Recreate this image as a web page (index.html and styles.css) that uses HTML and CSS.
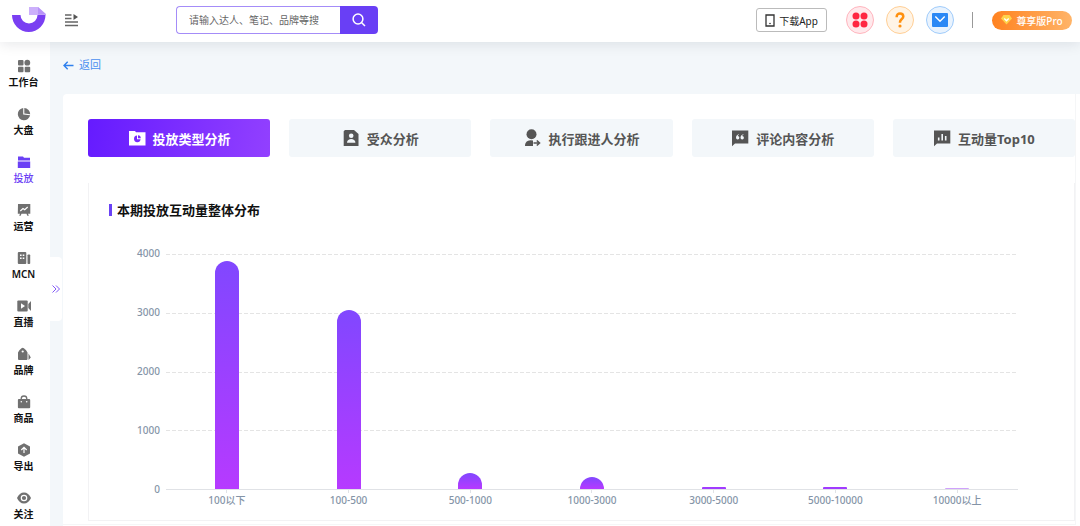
FILE: index.html
```html
<!DOCTYPE html>
<html lang="zh-CN">
<head>
<meta charset="utf-8">
<meta name="viewport" content="width=device-width, initial-scale=1">
<title>投放类型分析</title>
<link rel="stylesheet" href="styles.css">
</head>
<body>
<header class="topbar">
  <a class="logo" href="#" aria-label="首页">
    <svg width="34" height="26" viewBox="0 0 34 26"><path d="M0 8h8.500a8.500 8.500 0 0 0 17 0H33.500a16.700 17 0 0 1-33.500 0z" fill="#7a3ff2"/><path d="M17 0h9l8 7v1h-8l-1 0H17z" fill="#ccb0fb"/><path d="M26 0l8 7.500H26z" fill="#b893f8"/></svg>
  </a>
  <button class="menu-toggle" type="button" aria-label="展开菜单">
    <svg width="14" height="13" viewBox="0 0 14 13"><path d="M0 1h6.500M0 4.500h6.500M0 8h13M0 11.500h13" stroke="#666" stroke-width="1.300"/><path d="M8.500 0v6l4.500-3z" fill="#555"/></svg>
  </button>
  <form class="search">
    <input class="search-input" type="text" aria-label="搜索" placeholder="请输入达人、笔记、品牌等搜">
    <button class="search-button" type="button" aria-label="搜索">
      <svg width="14" height="14" viewBox="0 0 14 14" fill="none" stroke="#fff" stroke-width="1.500"><circle cx="6" cy="6" r="4.900"/><path d="M9.500 9.500l3.500 3.500"/></svg>
    </button>
  </form>
  <div class="actions">
    <button class="download" type="button">
      <svg width="10" height="13" viewBox="0 0 10 13"><path d="M1 1h8v11H1z" fill="none" stroke="#333" stroke-width="1.300"/><circle cx="5" cy="9.500" r=".8" fill="#333"/></svg>
      <span>下载App</span>
    </button>
    <button class="round red" type="button" aria-label="应用">
      <svg width="16" height="16" viewBox="0 0 16 16" fill="#ff2742"><circle cx="4" cy="4" r="3.500"/><circle cx="12" cy="4" r="3.500"/><circle cx="4" cy="12" r="3.500"/><circle cx="12" cy="12" r="3.500"/></svg>
    </button>
    <button class="round orange" type="button" aria-label="帮助">
      <svg width="12" height="16" viewBox="0 0 12 16"><path d="M2.700 5.200V4.600C2.700 2.700 4 1.500 6 1.500s3.300 1.200 3.300 3c0 2.400-3.300 2.600-3.300 5.600v.6" fill="none" stroke="#ff900f" stroke-width="2.500"/><circle cx="6" cy="14" r="1.600" fill="#ff900f"/></svg>
    </button>
    <button class="round blue" type="button" aria-label="消息">
      <svg width="16" height="14" viewBox="0 0 16 14"><rect width="16" height="14" rx="1" fill="#2b88f5"/><path d="M3.300 3.500L8 8.300l4.700-4.800" fill="none" stroke="#fff" stroke-width="1.400"/></svg>
    </button>
    <span class="divider"></span>
    <button class="pro" type="button">
      <svg width="11" height="10" viewBox="0 0 11 10"><path d="M2.500 0h6L11 3.500 5.500 9.500 0 3.500z" fill="#ffd24a"/><path d="M3.300 3.500l2.200 2.300 2.200-2.300" fill="none" stroke="#fff" stroke-width="1.300"/></svg>
      <span>尊享版Pro</span>
    </button>
  </div>
</header>
<div class="layout">
  <nav class="sidebar">
    <a class="side-item" href="#"><svg width="14" height="14" viewBox="0 0 14 14"><rect x="1" y="1" width="5.500" height="5.500" rx="1"/><circle cx="10.300" cy="3.700" r="2.900"/><rect x="1" y="7.700" width="5.500" height="5.500" rx="1"/><rect x="7.700" y="7.700" width="5.500" height="5.500" rx="1"/></svg><span>工作台</span></a>
    <a class="side-item" href="#"><svg width="14" height="14" viewBox="0 0 14 14"><path d="M6.200 1a6.200 6.200 0 1 0 6.900 7.300L6.200 7.500z"/><path d="M7.300 1a6.200 6.200 0 0 1 5.900 6.200L7.300 6.500z"/></svg><span>大盘</span></a>
    <a class="side-item active" href="#"><svg width="14" height="14" viewBox="0 0 14 14"><path d="M1 1.500h5l1 1.300h6v2.700H1zM.8 6.600h12.400V13H.8z"/></svg><span>投放</span></a>
    <a class="side-item" href="#"><svg width="14" height="14" viewBox="0 0 14 14"><path d="M1 1h12.300v9.700H11l.8 2h-1.500l-.8-2h-5l-.8 2H2.200l.8-2H.8z"/><path d="M3.300 8l2.700-2.500 1.700 1.300L10.700 4" fill="none" stroke="#fff" stroke-width="1.200"/></svg><span>运营</span></a>
    <a class="side-item" href="#"><svg width="14" height="14" viewBox="0 0 14 14"><rect x=".8" y="1" width="8.500" height="12" rx="1"/><rect x="10.500" y="3.500" width="2.700" height="9.500" rx=".8"/><path d="M3 3.500h1.600v1.600H3zM5.700 3.500h1.600v1.600H5.700zM3 6.500h1.600v1.600H3zM5.700 6.500h1.600v1.600H5.700z" fill="#fff"/></svg><span>MCN</span></a>
    <a class="side-item" href="#"><svg width="14" height="14" viewBox="0 0 14 14"><rect x=".3" y="1.500" width="10.400" height="11" rx="1"/><path d="M11.300 5L14 2v10l-2.700-3z"/><path d="M4 4.300v5.400L8 7z" fill="#fff"/></svg><span>直播</span></a>
    <a class="side-item" href="#"><svg width="14" height="14" viewBox="0 0 14 14"><path d="M1 5.500Q2 3 4.500 1.200q1.200-1 2.400 0Q9.500 3 10.500 5.500V12q0 1-1 1H2q-1 0-1-1z"/><circle cx="5.700" cy="4.500" r="1.100" fill="#fff"/><path d="M11.500 6.500l2.300 4-2.300 2.500z"/></svg><span>品牌</span></a>
    <a class="side-item" href="#"><svg width="14" height="14" viewBox="0 0 14 14"><path d="M4.200 5V3.800a2.800 2.800 0 0 1 5.600 0V5" fill="none" stroke="#707070" stroke-width="1.300"/><rect x=".9" y="4" width="12.300" height="9.300" rx="1"/><circle cx="4.300" cy="6.800" r=".8" fill="#fff"/><circle cx="9.700" cy="6.800" r=".8" fill="#fff"/></svg><span>商品</span></a>
    <a class="side-item" href="#"><svg width="14" height="14" viewBox="0 0 14 14"><path d="M7 .3l6 3.200v7L7 13.700 1 10.500v-7z"/><path d="M7 10V4.500M4.300 7L7 4.300 9.700 7" fill="none" stroke="#fff" stroke-width="1.200"/></svg><span>导出</span></a>
    <a class="side-item" href="#"><svg width="14" height="14" viewBox="0 0 14 14"><path d="M0 7c1.500-3.500 4-5.500 7-5.500S12.500 3.500 14 7c-1.500 3.500-4 5.500-7 5.500S1.500 10.500 0 7z"/><circle cx="7" cy="7" r="2.700" fill="none" stroke="#fff" stroke-width="1.200"/></svg><span>关注</span></a>
    <button class="expand" type="button" aria-label="展开侧栏">
      <svg width="8" height="8" viewBox="0 0 8 8" fill="none" stroke="#8058f5"><path d="M.5 .5L4 4 .5 7.500M4 .5L7.500 4 4 7.500"/></svg>
    </button>
  </nav>
  <main class="main">
    <div class="back-row">
      <a class="back" href="#"><svg width="11" height="9" viewBox="0 0 11 9" fill="none" stroke="#2f80ed" stroke-width="1.400"><path d="M10.500 4.500H1M4.700 .7L1 4.500l3.700 3.800"/></svg><span>返回</span></a>
    </div>
    <div class="page">
      <div class="page-inner">
        <div class="tabs">
          <button class="tab selected" type="button"><svg width="18" height="18" viewBox="0 0 18 18"><path d="M1 2h6l1 1.300h9.500V16.500H1z"/><path d="M9 6.600a3.300 3.300 0 1 0 3.600 3.700H9z" fill="#7929ff"/><path d="M10 6.300v2.900h2.800a3 3 0 0 0-2.800-2.900z" fill="#7929ff"/></svg><span>投放类型分析</span></button>
          <button class="tab" type="button"><svg width="18" height="18" viewBox="0 0 18 18"><path d="M3 1h9l4.500 4v12H1.700V2.300z"/><circle cx="9.200" cy="6.800" r="2.300" fill="#f3f7fa"/><path d="M5 13.700c0-5 8.400-5 8.400 0z" fill="#f3f7fa"/></svg><span>受众分析</span></button>
          <button class="tab" type="button"><svg width="18" height="18" viewBox="0 0 18 18"><circle cx="8.500" cy="5.200" r="5"/><path d="M2 17c0-3.500 2-5.500 5.500-5.700l2.500.2v5.500z"/><path d="M10.500 14h6M13.800 11.500l2.700 2.500-2.700 2.500" fill="none" stroke="#555" stroke-width="1.600"/></svg><span>执行跟进人分析</span></button>
          <button class="tab" type="button"><svg width="18" height="18" viewBox="0 0 18 18"><path d="M1 1.500h16.300v13H4L1 17.300z"/><path d="M8 5.200C6 5.500 5 6.800 5 8.700a1.700 1.700 0 1 0 1.700-1.700c.1-.5.500-.9 1.300-1.200zM12.500 5.200c-2 .3-3 1.600-3 3.500a1.700 1.700 0 1 0 1.700-1.700c.1-.5.500-.9 1.300-1.200z" fill="#f3f7fa"/></svg><span>评论内容分析</span></button>
          <button class="tab" type="button"><svg width="18" height="18" viewBox="0 0 18 18"><path d="M1 1.500h16.300v13H4L1 17.300z"/><path d="M5.700 8.500v3M9.200 5v6.500M12.700 7v4.500" stroke="#f3f7fa" stroke-width="1.600"/></svg><span>互动量Top10</span></button>
        </div>
        <section class="panel">
          <h2 class="panel-title">本期投放互动量整体分布</h2>
          <div class="chart">
            <div class="y-axis"><span>4000</span><span>3000</span><span>2000</span><span>1000</span><span>0</span></div>
            <div class="plot">
              <div class="grid-lines"><i></i><i></i><i></i><i></i></div>
              <div class="bars">
                <div class="slot"><div class="bar" style="height:97%"></div></div>
                <div class="slot"><div class="bar" style="height:76%"></div></div>
                <div class="slot"><div class="bar" style="height:7%"></div></div>
                <div class="slot"><div class="bar" style="height:5.200%"></div></div>
                <div class="slot"><div class="bar flat" style="height:0.850%"></div></div>
                <div class="slot"><div class="bar flat" style="height:0.700%"></div></div>
                <div class="slot"><div class="bar flat faint" style="height:0.430%"></div></div>
              </div>
            </div>
            <div class="x-axis"><span>100以下</span><span>100-500</span><span>500-1000</span><span>1000-3000</span><span>3000-5000</span><span>5000-10000</span><span>10000以上</span></div>
          </div>
        </section>
      </div>
    </div>
  </main>
</div>
</body>
</html>
```
FILE: styles.css
```css
* { box-sizing: border-box; }
body {
  margin: 0;
  min-height: 100vh;
  display: flex;
  flex-direction: column;
  background: #fff;
  color: #111;
  font-family: "Noto Sans", "Noto Sans CJK SC", sans-serif;
  font-size: 10px;
}
button, input { font: inherit; margin: 0; padding: 0; }
button { border: 0; background: none; cursor: pointer; }
a { color: inherit; text-decoration: none; }
svg { display: block; flex: none; }

.topbar {
  display: flex;
  align-items: center;
  height: 42px;
  padding: 0 8px 2px 12px;
  background: #fff;
  box-shadow: 0 2px 14px rgba(0, 20, 40, 0.1);
  position: relative;
  z-index: 2;
}
.menu-toggle { margin-left: 19px; }
.search {
  display: flex;
  height: 28px;
  margin-left: 97px;
  width: 202px;
}
.search-input {
  flex: 1;
  min-width: 0;
  padding: 0 12px;
  border: 1px solid #a48cf8;
  border-right: 0;
  border-radius: 4px 0 0 4px;
  outline: 0;
  background: #fff;
}
.search-input::placeholder { color: #666; opacity: 1; }
.search-button {
  width: 38px;
  display: grid;
  place-items: center;
  border-radius: 0 4px 4px 0;
  background: #693ff5;
}
.actions { display: flex; align-items: center; margin-left: auto; }
.download {
  display: flex;
  align-items: center;
  justify-content: center;
  gap: 4px;
  width: 71px;
  height: 24px;
  border: 1px solid #bbb;
  border-radius: 3px;
  color: #222;
}
.round {
  display: grid;
  place-items: center;
  width: 28px;
  height: 28px;
  border: 1px solid;
  border-radius: 50%;
  margin-left: 12px;
}
.red { margin-left: 19px; border-color: #ffb5be; background: #ffe9ec; }
.orange { border-color: #ffcf96; background: #fff4e6; }
.blue { border-color: #a0ccfb; background: #e9f3fe; }
.divider { width: 1px; height: 16px; margin: 0 19px 0 18px; background: #999; }
.pro {
  display: flex;
  align-items: center;
  justify-content: center;
  gap: 4px;
  width: 80px;
  height: 19px;
  border-radius: 10px;
  color: #fff;
  font-weight: 500;
  background: linear-gradient(90deg, #ff8220, #ffb468);
}

.layout { display: flex; flex: 1; }
.sidebar {
  position: relative;
  display: flex;
  flex-direction: column;
  gap: 18px;
  width: 50px;
  flex: none;
  padding-top: 17px;
  background: #fff;
}
.side-item {
  display: flex;
  flex-direction: column;
  align-items: center;
  gap: 2px;
  height: 30px;
  padding-right: 3px;
  line-height: 14px;
  font-weight: 600;
  white-space: nowrap;
}
.side-item svg { fill: #707070; }
.side-item.active { color: #6a40f5; font-weight: 500; }
.side-item.active svg { fill: #6a40f5; }
.expand {
  position: absolute;
  left: 100%;
  top: 215px;
  display: grid;
  place-items: center;
  width: 12px;
  height: 64px;
  border-radius: 0 4px 4px 0;
  background: #fff;
}

.main {
  flex: 1;
  min-width: 0;
  display: flex;
  flex-direction: column;
  padding-left: 13px;
  background: #f3f7fa;
}
.back-row { height: 52px; padding-top: 15px; }
.back {
  display: inline-flex;
  align-items: center;
  gap: 5px;
  font-size: 11px;
  line-height: 16px;
  color: #4a8ff0;
}
.page {
  flex: 1;
  padding-right: 4px;
  border-radius: 4px 0 0 0;
  background: #fff;
}
.page-inner {
  padding: 25px 0 3px 25px;
  border: solid #f5f6f7;
  border-width: 0 1px 1px 0;
}
.tabs { display: grid; grid-template-columns: repeat(5, 1fr); gap: 19px; }
.tab {
  display: flex;
  align-items: center;
  justify-content: center;
  gap: 7px;
  height: 38px;
  border-radius: 3px;
  background: #f3f7fa;
  color: #555;
  font-size: 13px;
  font-weight: 700;
}
.tab svg { fill: #555; }
.tab.selected { color: #fff; background: linear-gradient(100deg, #651bff, #9240ff); }
.tab.selected svg { fill: #fff; }
.panel {
  margin-top: 26px;
  padding: 20px 56px 12px 20px;
  border: solid #f2f2f4;
  border-width: 0 1px 1px 1px;
}
.panel-title {
  display: flex;
  align-items: center;
  gap: 5px;
  margin: 0;
  font-size: 13px;
  line-height: 14px;
  color: #111;
}
.panel-title::before { content: ""; width: 3px; height: 12px; background: #6a42f5; }
.chart {
  display: grid;
  grid-template-columns: 51px 1fr;
  column-gap: 6px;
  margin-top: 37px;
  color: #8494a7;
  font-weight: 500;
}
.y-axis {
  display: flex;
  flex-direction: column;
  justify-content: space-between;
  height: 248px;
  margin: -7px 0 -5px;
  line-height: 12px;
  text-align: right;
}
.plot { display: grid; height: 236px; border-bottom: 1px solid #e0e2e6; }
.grid-lines, .bars { grid-area: 1 / 1; }
.grid-lines { display: grid; grid-template-rows: repeat(4, 1fr); }
.grid-lines i {
  background: repeating-linear-gradient(90deg, #e4e4e4 0 4px, transparent 4px 6px) top / 100% 1px no-repeat;
}
.bars, .x-axis { display: grid; grid-template-columns: repeat(7, 1fr); }
.slot { display: flex; align-items: flex-end; justify-content: center; }
.bar {
  width: 24px;
  border-radius: 12px 12px 0 0;
  background: linear-gradient(#8147ff, #b63aff);
}
.bar.flat { border-radius: 1px 1px 0 0; background: #a13cff; }
.bar.faint { background: #cfa2fb; }
.x-axis { grid-column: 2; text-align: center; line-height: 14px; }
.x-axis span::before {
  content: "";
  display: block;
  width: 1px;
  height: 3px;
  margin: 0 auto;
  background: #e0e2e6;
}
.x-axis span { padding-bottom: 1px; }
```
